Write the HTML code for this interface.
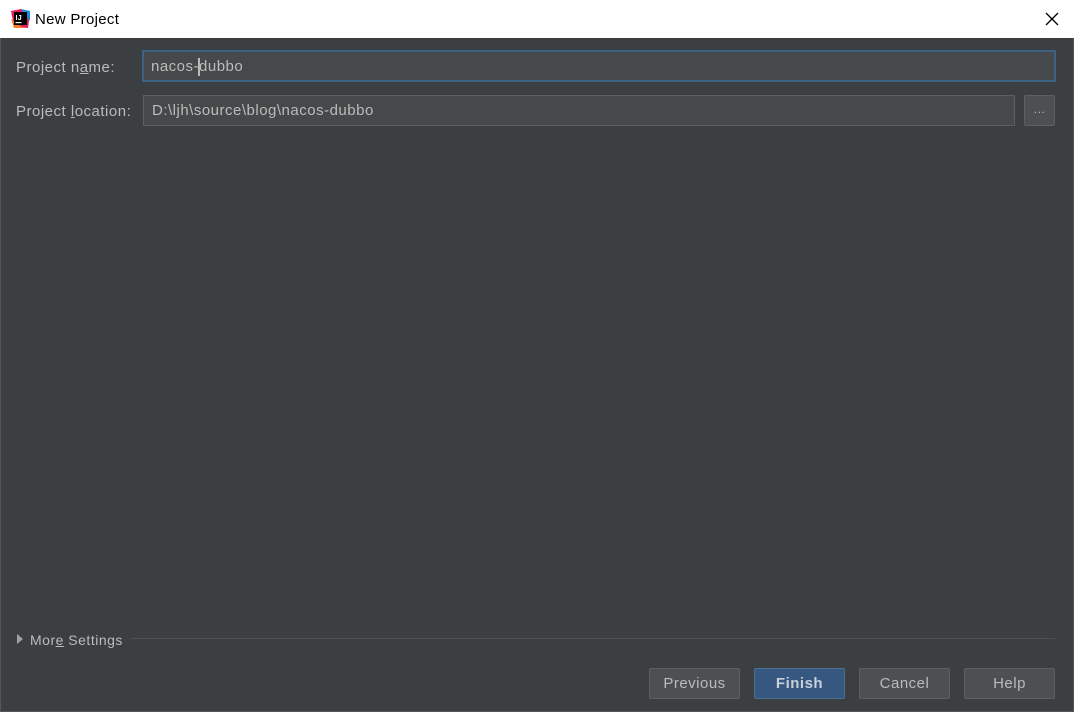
<!DOCTYPE html>
<html><head><style>
*{margin:0;padding:0;box-sizing:border-box}
body{width:1074px;height:712px;background:#3c3f41;font-family:"Liberation Sans","Noto Sans CJK SC",sans-serif;font-size:15px;color:#bbbbbb;position:relative;overflow:hidden;box-shadow:inset 1px 0 0 #555,inset -1px 0 0 #555,inset 0 -1px 0 #555;letter-spacing:0.5px}
.title{position:absolute;left:0;top:0;width:1074px;height:38px;background:#fff;color:#000;font-size:15px;letter-spacing:0.3px}
.abs{position:absolute}
.field{position:absolute;background:#45494a;border:1px solid #5e6060;color:#bbbbbb;padding-left:8px;line-height:30px}
.btn{position:absolute;top:668px;width:91px;height:31px;background:#4c5052;border:1px solid #5e6060;border-radius:2px;text-align:center;line-height:29px;color:#bbbbbb;font-size:15px}
</style></head><body>
<div class="title">
  <svg class="abs" style="left:11px;top:9px" width="19" height="19" viewBox="0 0 19 19">
    <polygon points="0,2 10,0 19,6 17,19 3,18" fill="#e4205f"/>
    <polygon points="10,0 19,2 19,12" fill="#1d8ce0"/>
    <polygon points="0,10 3,19 12,19" fill="#fe7b1f"/>
    <rect x="3" y="3" width="13" height="13" fill="#000"/>
    <text x="4.5" y="11" font-size="7" font-weight="bold" fill="#fff" font-family="Liberation Sans">IJ</text>
    <rect x="4.5" y="13" width="6" height="1.2" fill="#fff"/>
  </svg>
  <div class="abs" style="left:35px;top:11px">New Project</div>
  <svg class="abs" style="left:1045px;top:12px" width="14" height="14"><path d="M1 1L13 13M13 1L1 13" stroke="#000" stroke-width="1.3"/></svg>
</div>
<div class="abs" style="left:16px;top:59px">Project n<u>a</u>me:</div>
<div class="field" style="left:142px;top:50px;width:914px;height:32px;border:2px solid #3d6185;padding-left:7px;line-height:30px">nacos-dubbo<span class="abs" style="left:54px;top:6px;width:2px;height:18px;background:#bbb"></span></div>
<div class="abs" style="left:16px;top:103px">Project <u>l</u>ocation:</div>
<div class="field" style="left:143px;top:95px;width:872px;height:31px">D:\ljh\source\blog\nacos-dubbo</div>
<div class="btn" style="left:1024px;top:95px;width:31px;height:31px;line-height:26px;font-size:12px">...</div>
<svg class="abs" style="left:17px;top:634px" width="7" height="10"><path d="M0 0L6 5L0 10Z" fill="#a0a0a0"/></svg>
<div class="abs" style="left:30px;top:632px;font-size:14px">Mor<u>e</u> Settings</div>
<div class="abs" style="left:131px;top:638px;width:924px;height:1px;background:#515151"></div>
<div class="btn" style="left:649px">Previous</div>
<div class="btn" style="left:754px;background:#365880;border-color:#4c708c;font-weight:bold;color:#c8d0d8">Finish</div>
<div class="btn" style="left:859px">Cancel</div>
<div class="btn" style="left:964px">Help</div>
</body></html>
